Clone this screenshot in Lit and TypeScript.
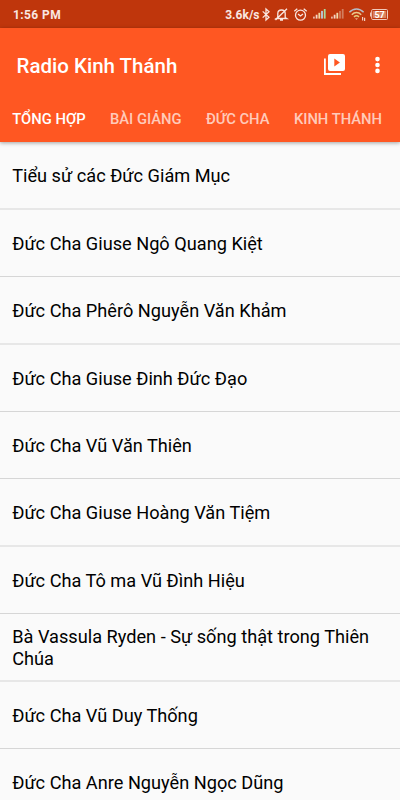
import { LitElement, html, css, svg } from "lit";
import { customElement } from "lit/decorators.js";
import { classMap } from "lit/directives/class-map.js";

const TABS = ["TỔNG HỢP", "BÀI GIẢNG", "ĐỨC CHA", "KINH THÁNH"];
// soft: the divider falls between two pixel rows and is drawn wide and pale
const ROWS: { name: string; soft: boolean }[] = [
  { name: "Tiểu sử các Đức Giám Mục", soft: true },
  { name: "Đức Cha Giuse Ngô Quang Kiệt", soft: false },
  { name: "Đức Cha Phêrô Nguyễn Văn Khảm", soft: true },
  { name: "Đức Cha Giuse Đinh Đức Đạo", soft: false },
  { name: "Đức Cha Vũ Văn Thiên", soft: false },
  { name: "Đức Cha Giuse Hoàng Văn Tiệm", soft: true },
  { name: "Đức Cha Tô ma Vũ Đình Hiệu", soft: false },
  { name: "Bà Vassula Ryden - Sự sống thật trong Thiên Chúa", soft: true },
  { name: "Đức Cha Vũ Duy Thống", soft: false },
  { name: "Đức Cha Anre Nguyễn Ngọc Dũng", soft: false },
];
const FULL_SIGNAL = ["#e5b3a0", "#f5d5c8", "#f2d9a0", "#b9cfe0", "#a9dc9c"];
const WEAK_SIGNAL = ["#e5b3a0", "#f5d5c8", "#f2dcae", "#d27d5e", "#d27d5e"];

@customElement("status-bar")
class StatusBar extends LitElement {
  static styles = css`
    :host { display: flex; align-items: center; height: 28px; box-sizing: border-box;
      padding: 0 12.5px 0 13px; background: #bf360c; color: #f9e6e0; font-size: 12px; font-weight: 700; }
    .time { flex: 1; letter-spacing: 0.4px; padding-top: 2px; }
    .speed { padding-top: 1px; }
    svg { display: block; flex: none; overflow: visible; }
    .bt { margin-left: 2px; }
    .mute { margin-left: 5px; }
    .alarm { margin-left: 6px; }
    .sig { margin-left: 6px; }
    .sig + .sig { margin-left: 5px; }
    .wifi { margin-left: 5px; }
    .bat { margin-left: 4px; }
    .level { font-size: 9px; }
  `;
  bars(colors: string[]) {
    return svg`${colors.map((c, i) => svg`<rect x=${i * 2.7} y=${7.6 - i * 1.9} width="1.8" height=${2 + i * 1.9} fill=${c}></rect>`)}`;
  }
  render() {
    return html`
      <span class="time">1:56 PM</span>
      <span class="speed">3.6k/s</span>
      <svg class="bt" width="8" height="13" viewBox="0 0 8 13" fill="none" stroke="currentColor" stroke-width="1.3">
        <path d="M.7 3.4L7 9.3L4 12V1L7 3.7L.7 9.6"></path></svg>
      <svg class="mute" width="13" height="13" viewBox="0 0 13 13" fill="none" stroke="currentColor" stroke-width="1.3">
        <path d="M2.8 9.5V5.5C2.8 3 4.2 2 6.5 2S10.2 3 10.2 5.5V9.5L11.8 10.5H1.2ZM5 12H8M.5 12L12 .8"></path></svg>
      <svg class="alarm" width="13" height="13" viewBox="0 0 13 13" fill="none" stroke="currentColor" stroke-width="1.3">
        <circle cx="6.5" cy="7.2" r="5"></circle><path d="M.3 3.2L3.3.8M12.7 3.2L9.7.8M4 6L6.5 8L9 6"></path></svg>
      <svg class="sig" width="13" height="10">${this.bars(FULL_SIGNAL)}</svg>
      <svg class="sig" width="13" height="10">${this.bars(WEAK_SIGNAL)}</svg>
      <svg class="wifi" width="17" height="13" viewBox="0 0 17 13" fill="none" stroke-width="1.5">
        <path stroke="#b5bcc8" d="M.4 4.2C4.5-.2 10.5-.2 14.6 4.2"></path>
        <path stroke="#ecc98c" d="M2.8 6.7C5.6 3.8 9.4 3.8 12.2 6.7"></path>
        <path stroke="#e3cf7e" d="M5 9C6.5 7.4 8.5 7.4 10 9"></path>
        <path d="M6 10.3H9L7.5 12Z" fill="#e9a58a"></path>
        <path d="M13.6 9V12.5M15.6 9.8V13" stroke="#f2cfc2" stroke-width="1.2"></path></svg>
      <svg class="bat" width="18" height="11" viewBox="0 0 18 11">
        <rect x="1.7" y=".5" width="15.8" height="10" rx="1" fill="none" stroke="#f0c8ba"></rect>
        <rect x="3" y="2" width="13.2" height="7" fill="#d9825f"></rect>
        <rect x="0" y="3.5" width="1.3" height="4" fill="#f0c8ba"></rect>
        <text class="level" x="9.6" y="8.7" text-anchor="middle" fill="#fff">57</text></svg>
    `;
  }
}

@customElement("app-header")
class AppHeader extends LitElement {
  static styles = css`
    :host { display: block; height: 114px; background: #ff5722; color: #fff; position: relative;
      box-shadow: 0 1px 4px rgba(0, 0, 0, 0.36); }
    .bar { display: flex; align-items: center; height: 76px; padding: 0 20px 0 16.5px; box-sizing: border-box; }
    .title { flex: 1; margin: 0; font-size: 20.5px; font-weight: 500; }
    svg { display: block; }
    .play { margin-bottom: 3px; }
    .more { margin-left: 30px; margin-bottom: 2px; }
    .tabs { display: flex; align-items: center; height: 30px; padding-left: 12.3px; gap: 24.4px;
      font-size: 14.75px; font-weight: 500; white-space: nowrap; }
    .tab { color: rgba(255, 255, 255, 0.7); }
    .active { color: #fff; }
  `;
  render() {
    return html`
      <div class="bar">
        <h1 class="title">Radio Kinh Thánh</h1>
        <svg class="play" width="21" height="21" viewBox="0 0 21 21">
          <path d="M.9 4.5V20H17" fill="none" stroke="#fff" stroke-width="1.8"></path>
          <path fill="#fff" fill-rule="evenodd" d="M6 0H19Q21 0 21 2V15Q21 17 19 17H6Q4 17 4 15V2Q4 0 6 0ZM10.3 4.4V12.4L15.9 8.4Z"></path></svg>
        <svg class="more" width="5" height="18" viewBox="0 0 5 18" fill="#fff">
          <circle cx="2.5" cy="3.1" r="2.3"></circle><circle cx="2.5" cy="9" r="2.3"></circle><circle cx="2.5" cy="14.9" r="2.3"></circle></svg>
      </div>
      <nav class="tabs">${TABS.map((t, i) => html`<span class=${classMap({ tab: true, active: i === 0 })}>${t}</span>`)}</nav>
    `;
  }
}

@customElement("app-root")
class AppRoot extends LitElement {
  static styles = css`
    :host { display: flex; flex-direction: column; width: 400px; height: 800px; overflow: hidden;
      background: #fafafa; font-family: Roboto, "Noto Sans", sans-serif; }
    status-bar, app-header { flex: none; }
    .list { list-style: none; margin: 0; padding: 0; }
    .row { display: flex; align-items: center; height: 67px; box-sizing: border-box; padding: 1px 12px 0 12.2px;
      border-bottom: 1px solid #d6d6d6; font-size: 18.18px; line-height: 21.3px; color: #000; }
    .soft { height: 68px; border-bottom: 2px solid #e7e7e7; }
  `;
  render() {
    return html`
      <status-bar></status-bar>
      <app-header></app-header>
      <ul class="list">${ROWS.map((r) => html`<li class=${classMap({ row: true, soft: r.soft })}>${r.name}</li>`)}</ul>
    `;
  }
}
